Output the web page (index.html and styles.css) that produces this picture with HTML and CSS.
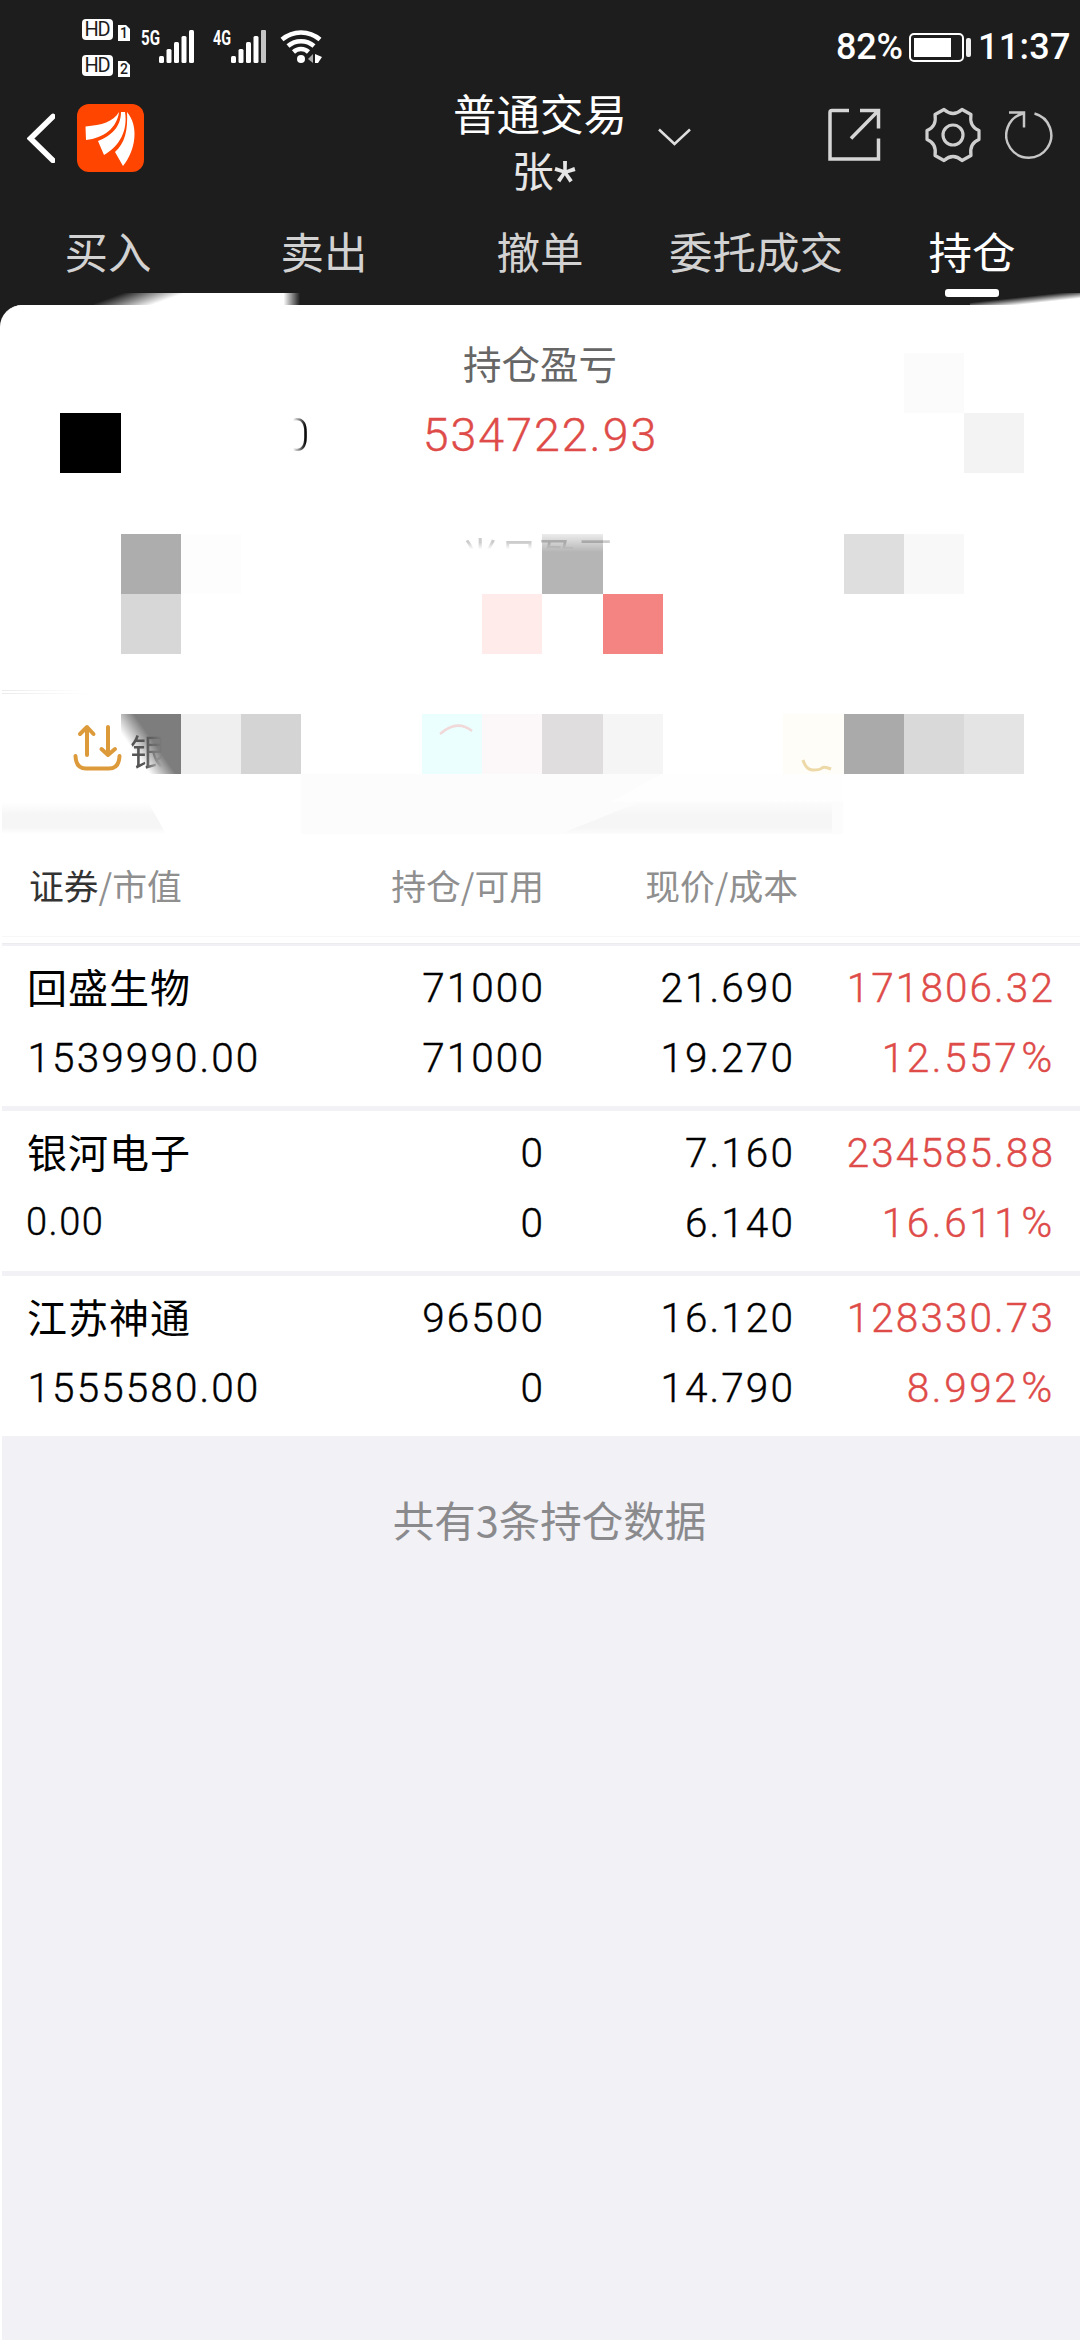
FILE: index.html
```html
<!DOCTYPE html>
<html lang="zh-CN">
<head>
  <meta charset="UTF-8" />
  <meta name="viewport" content="width=device-width, initial-scale=1.0"/>
  <title>持仓</title>
  <link rel="stylesheet" href="styles.css">
</head>
<body>

<header class="top">
  <div class="status-bar">
    <svg class="status-icons" width="250" height="60" viewBox="78 10 250 60">
      <g fill="#fff">
        <rect x="82" y="19" width="31" height="21" rx="4"/>
        <rect x="82" y="55" width="31" height="21" rx="4"/>
        <path d="M118 25h8l4 4v12h-12zM118 61h8l4 4v12h-12z"/>
        <rect x="159" y="56" width="5" height="7" rx="1.5"/>
        <rect x="166.500" y="49" width="5" height="14" rx="1.500"/>
        <rect x="174" y="42" width="5" height="21" rx="1.500"/>
        <rect x="181.500" y="36" width="5" height="27" rx="1.500"/>
        <rect x="189" y="30" width="5" height="33" rx="1.500"/>
        <rect x="231" y="56" width="5" height="7" rx="1.500"/>
        <rect x="238.500" y="49" width="5" height="14" rx="1.500"/>
        <rect x="246" y="42" width="5" height="21" rx="1.500"/>
        <rect x="253.500" y="36" width="5" height="27" rx="1.500"/>
        <rect x="261" y="30" width="5" height="33" rx="1" fill="#c4c4c4"/>
        <circle cx="301" cy="59" r="4"/>
        <path d="M315 54l7 3-4 6h-3z"/>
      </g>
      <path d="M313 54v9l-5-4z" fill="#aaa"/>
      <g fill="none" stroke="#fff" stroke-width="4.500">
        <path d="M282 39.500a29 29 0 0 1 38 0"/>
        <path d="M288 46a20 20 0 0 1 26 0"/>
        <path d="M293.500 52a11 11 0 0 1 15 0"/>
      </g>
      <g class="hd">
        <text x="84.500" y="36" textLength="26">HD</text>
        <text x="84.500" y="72" textLength="26">HD</text>
      </g>
      <g class="sim">
        <text x="120" y="38">1</text>
        <text x="120" y="74">2</text>
      </g>
      <g class="net">
        <text x="141" y="44.500" textLength="19" lengthAdjust="spacingAndGlyphs">5G</text>
        <text x="213" y="44.500" textLength="18" lengthAdjust="spacingAndGlyphs">4G</text>
      </g>
    </svg>
    <div class="status-right">
      <span class="battery-text">82%</span>
      <svg width="64" height="32" viewBox="907 32 64 32">
        <rect x="909" y="34" width="53" height="27" rx="4" fill="none" stroke="#fff" stroke-width="2"/>
        <rect x="913" y="38" width="37" height="19" fill="#fff"/>
        <rect x="965" y="38" width="5" height="19" rx="2" fill="#eee"/>
      </svg>
      <span class="clock">11:37</span>
    </div>
  </div>

  <div class="nav-bar">
    <div class="nav-left">
      <svg width="28" height="50" viewBox="27 112 28 50">
        <path d="M53 115.500L30.500 137.500L53 159.500" fill="none" stroke="#fff" stroke-width="5.500" stroke-linecap="round"/>
      </svg>
      <svg class="logo" width="68" height="68" viewBox="77 104 68 68">
        <rect x="77" y="104" width="67" height="68" rx="12" fill="#ff4500"/>
        <g fill="#fff">
          <path d="M119 112C113 122 102 125 85.500 126.500L86 140C104 138 117 128 119 112z"/>
          <path d="M121 112C121 127 111 136 98 141L104 155C120 146 128 130 125 112z"/>
          <path d="M127 112C128 130 125 143 115 152L123 166C136 150 139 126 127 112z"/>
        </g>
      </svg>
    </div>
    <div class="nav-title">
      <h1>普通交易</h1>
      <p>张<span class="star">*</span></p>
    </div>
    <svg class="chevron" width="38" height="22" viewBox="654 126 38 22">
      <path d="M657 129.500L672.500 144L688 129.500" fill="none" stroke="#dedede" stroke-width="2.500"/>
    </svg>
    <div class="nav-right">
      <svg width="56" height="56" viewBox="825 108 56 56">
        <path d="M848 111.500H831Q829 111.500 829 113.500V160H877.500V139.500M859 111.500H877.500V129.500M877 112L850 139.500" fill="none" stroke="#d6d6d6" stroke-width="3.500"/>
      </svg>
      <svg width="58" height="58" viewBox="-29 -29 58 58">
        <path d="M-9 -25.500Q0 -17.500 9 -25.500L18 -20.500Q16 -8.500 26 -4.500V4.500Q16 8.500 18 20.500L9 25.500Q0 17.500 -9 25.500L-18 20.500Q-16 8.500 -26 4.500V-4.500Q-16 -8.500 -18 -20.500z" fill="none" stroke="#cfcfcf" stroke-width="3.200" stroke-linejoin="round"/>
        <circle r="10" fill="none" stroke="#cfcfcf" stroke-width="3.200"/>
      </svg>
      <svg class="refresh" width="50" height="50" viewBox="1004 110 50 50">
        <path d="M1033.500 113.500A22.500 22.500 0 1 1 1022 113.500M1008 112.500H1023V127.500" fill="none" stroke="#c6c6c6" stroke-width="2.500"/>
      </svg>
    </div>
  </div>

  <nav class="tabs">
    <a>买入</a>
    <a>卖出</a>
    <a>撤单</a>
    <a>委托成交</a>
    <a class="active">持仓</a>
  </nav>
  <div class="smear smear-left"></div>
  <div class="smear smear-right"></div>
</header>

<main>
  <section class="summary">
    <p class="summary-label">持仓盈亏</p>
    <p class="summary-value">534722.93</p>

    <!-- mosaic over the private numbers -->
    <div class="mosaic">
      <i class="r1 c15 t-fb"></i>
      <i class="r2 c1 t-black"></i>
      <i class="r2 c16 t-f3"></i>
      <i class="r4 c2 t-ad"></i>
      <i class="r4 c3 t-fd"></i>
      <i class="r4 c9 t-fade"></i>
      <i class="r4 c14 t-de"></i>
      <i class="r4 c15 t-f8"></i>
      <i class="r5 c2 t-d7"></i>
      <i class="r5 c8 t-pink"></i>
      <i class="r5 c10 t-red"></i>
      <i class="r7 c2 t-dark"></i>
      <i class="r7 c3 t-ef"></i>
      <i class="r7 c4 t-d4"></i>
      <i class="r7 c7 t-cyan"></i>
      <i class="r7 c8 t-rose"></i>
      <i class="r7 c9 t-df"></i>
      <i class="r7 c10 t-f5"></i>
      <i class="r7 c13 t-cream"></i>
      <i class="r7 c14 t-aa"></i>
      <i class="r7 c15 t-d9"></i>
      <i class="r7 c16 t-e4"></i>
    </div>
    <span class="rest rest-zero">0</span>
    <span class="rest rest-today">当日盈亏</span>
    <span class="rest rest-bank">银</span>
    <svg class="rest rest-icons" width="1080" height="535" viewBox="0 305 1080 535">
      <defs>
        <linearGradient id="band" x1="0" y1="0" x2="0" y2="1">
          <stop offset="0" stop-color="#f6f6f6" stop-opacity="0"/>
          <stop offset=".4" stop-color="#f6f6f6"/>
          <stop offset=".8" stop-color="#f6f6f6"/>
          <stop offset="1" stop-color="#f6f6f6" stop-opacity="0"/>
        </linearGradient>
        <linearGradient id="line" x1="0" y1="0" x2="1" y2="0">
          <stop offset="0" stop-color="#eaeaea"/>
          <stop offset="1" stop-color="#eaeaea" stop-opacity="0"/>
        </linearGradient>
      </defs>
      <rect x="301" y="774" width="542" height="60" fill="#fcfcfc"/>
      <path d="M662 774H843V802H610z" fill="#fff" opacity=".7"/>
      <path d="M0 802H148L166 834H0z" fill="url(#band)"/>
      <path d="M640 802H832V834H560z" fill="url(#band)"/>
      <rect x="0" y="690" width="80" height="1" fill="url(#line)"/>
      <rect x="0" y="693" width="90" height="1" fill="url(#line)"/>
      <g fill="none" stroke="#dd9a3a" stroke-width="4" stroke-linecap="round" stroke-linejoin="round">
        <path d="M87 755V729M80 734L87 727L93.500 734"/>
        <path d="M108 727V754M101.500 749L108 755L115 749"/>
        <path d="M75.500 756Q76 768.500 86 768.500H109Q119 768.500 119.500 756"/>
      </g>
      <path d="M440 734Q457 719 472 731" fill="none" stroke="#f1d8d9" stroke-width="2.500"/>
      <path d="M803 760Q806 770 813 770T822 768T831 769" fill="none" stroke="#e9cf94" stroke-width="3" opacity=".8"/>
    </svg>
  </section>

  <div class="list-head">
    <span class="cell name"><b>证券</b>/市值</span>
    <span class="cell amount">持仓/可用</span>
    <span class="cell price">现价/成本</span>
    <span class="cell profit"></span>
  </div>

  <ul class="holdings">
    <li>
      <div class="cell name"><p class="cn">回盛生物</p><p>1539990.00</p></div>
      <div class="cell amount"><p>71000</p><p>71000</p></div>
      <div class="cell price"><p>21.690</p><p>19.270</p></div>
      <div class="cell profit"><p>171806.32</p><p>12.557<span class="pct">%</span></p></div>
    </li>
    <li>
      <div class="cell name"><p class="cn">银河电子</p><p class="small">0.00</p></div>
      <div class="cell amount"><p>0</p><p>0</p></div>
      <div class="cell price"><p>7.160</p><p>6.140</p></div>
      <div class="cell profit"><p>234585.88</p><p>16.611<span class="pct">%</span></p></div>
    </li>
    <li>
      <div class="cell name"><p class="cn">江苏神通</p><p>1555580.00</p></div>
      <div class="cell amount"><p>96500</p><p>0</p></div>
      <div class="cell price"><p>16.120</p><p>14.790</p></div>
      <div class="cell profit"><p>128330.73</p><p>8.992<span class="pct">%</span></p></div>
    </li>
  </ul>

  <p class="total">共有3条持仓数据</p>
</main>

</body>
</html>
```
FILE: styles.css
```css
* { box-sizing: border-box; }
body {
  margin: 0;
  width: 1080px;
  height: 2340px;
  background: #1d1d1d;
  font-family: 'Noto Sans CJK SC', sans-serif;
  overflow: hidden;
  display: flex;
  flex-direction: column;
}
h1, p, ul {
  margin: 0;
  padding: 0;
  font-weight: 400;
}
svg { display: block; flex: none; }

/* header */
.top {
  height: 305px;
  position: relative;
  flex: none;
}
.status-bar {
  height: 80px;
  padding: 10px 11px 0 78px;
  display: flex;
  justify-content: space-between;
  color: #fff;
}
.status-icons { overflow: visible; }
.hd text {
  font: 400 20px Roboto, sans-serif;
  fill: #1d1d1d;
}
.sim text {
  font: 500 14px Roboto, sans-serif;
  fill: #1d1d1d;
}
.net text {
  font: 700 20px Roboto, sans-serif;
  fill: #fff;
}
.status-right {
  display: flex;
  height: 32px;
  margin-top: 22px;
  font: 500 36px/30px Roboto, sans-serif;
}
.battery-text { width: 72px; letter-spacing: -0.200px; }
.clock { width: 91px; margin-left: 6px; letter-spacing: 0.300px; white-space: nowrap; }
.nav-bar {
  height: 128px;
  padding: 0 25px 0 27px;
  display: flex;
  align-items: flex-start;
}
.nav-left {
  display: flex;
  align-items: center;
  gap: 22px;
  width: 380px;
  padding-top: 24px;
}
.nav-title {
  width: 266px;
  text-align: center;
  color: #fff;
}
.nav-title h1 {
  font-size: 43.500px;
  line-height: 66px;
}
.nav-title p {
  font-size: 42px;
  line-height: 46px;
  color: #e6e6e6;
  padding-left: 8px;
}
.star {
  font-family: Roboto, sans-serif;
  font-size: 52px;
  line-height: 20px;
  position: relative;
  top: 11px;
}
.chevron { margin: 46px 0 0 -17px; }
.nav-right {
  flex: 1;
  display: flex;
  justify-content: flex-end;
  margin-top: 27px;
}
.nav-right svg:nth-child(2) { margin: -1px 23px 0 42px; }
.refresh { margin-top: 3px; }
.tabs {
  height: 97px;
  display: flex;
}
.tabs a {
  width: 216px;
  text-align: center;
  font-size: 43.500px;
  line-height: 86px;
  color: #d2d2d2;
  position: relative;
}
.tabs .active { color: #fff; }
.tabs .active::after {
  content: '';
  position: absolute;
  left: 81px;
  top: 81px;
  width: 54px;
  height: 8px;
  border-radius: 3px;
  background: #fff;
}
.smear {
  position: absolute;
  top: 293px;
  height: 12px;
}
.smear-left {
  left: 94px;
  width: 206px;
  background: linear-gradient(160deg, transparent 12%, #fff 38%);
  -webkit-mask: linear-gradient(to right, #000 92%, transparent);
  mask: linear-gradient(to right, #000 92%, transparent);
}
.smear-right {
  left: 970px;
  width: 110px;
  background: linear-gradient(to bottom right, transparent 40%, #fff 72%);
}

/* account summary */
main {
  flex: 1;
  background: #f1f1f6;
  border-top-left-radius: 22px;
  overflow: hidden;
  border-left: 2px solid #fff;
}
.summary {
  height: 535px;
  margin-left: -2px;
  background: #fff;
  position: relative;
  text-align: center;
  padding-top: 28px;
}
.summary-label {
  font-size: 38.500px;
  line-height: 58px;
  color: #666;
}
.summary-value {
  font: 300 46.500px/88px Roboto, sans-serif;
  letter-spacing: 2px;
  -webkit-text-stroke: .4px #de4b48;
  color: #de4b48;
  height: 76px;
  padding-left: 1px;
}
.mosaic {
  position: absolute;
  left: 0;
  top: 48px;
  display: grid;
  grid-template-columns: repeat(17, 60.250px);
  grid-template-rows: repeat(8, 60.200px);
}
.r1 { grid-row: 1; } .r2 { grid-row: 2; } .r4 { grid-row: 4; }
.r5 { grid-row: 5; } .r7 { grid-row: 7; }
.c1 { grid-column: 2; } .c2 { grid-column: 3; } .c3 { grid-column: 4; }
.c4 { grid-column: 5; } .c7 { grid-column: 8; } .c8 { grid-column: 9; }
.c9 { grid-column: 10; } .c10 { grid-column: 11; } .c13 { grid-column: 14; }
.c14 { grid-column: 15; } .c15 { grid-column: 16; } .c16 { grid-column: 17; }
.t-black { background: #000; }
.t-fb { background: #fbfbfb; }
.t-f3 { background: #f3f3f3; }
.t-ad { background: #adadad; }
.t-fd { background: #fdfdfd; }
.t-fade { background: linear-gradient(#ececec, #b5b5b5 30%); }
.t-de { background: #dedede; }
.t-f8 { background: #f8f8f8; }
.t-d7 { background: #d7d7d7; }
.t-pink { background: #feebea; }
.t-red { background: #f38482; }
.t-dark { background: linear-gradient(55deg, #fff 28%, #7d7d7d 54%); }
.t-ef { background: #efefef; }
.t-d4 { background: #d4d4d4; }
.t-cyan { background: #ebffff; }
.t-rose { background: #fcf8f9; }
.t-df { background: #dfdddd; }
.t-f5 { background: #f5f5f5; }
.t-cream { background: #fffdf8; }
.t-aa { background: #aaa; }
.t-d9 { background: #d9d9d9; }
.t-e4 { background: #e4e4e4; }

/* what the eraser left behind */
.rest { position: absolute; }
.rest-icons { left: 0; top: 0; }
.rest-zero {
  left: 284px;
  top: 101px;
  font: 300 46px/58px Roboto, sans-serif;
  color: transparent;
  background: linear-gradient(to right, #fff 35%, #000 85%);
  -webkit-background-clip: text;
  background-clip: text;
}
.rest-today {
  left: 461px;
  top: 220px;
  font-size: 38.500px;
  line-height: 58px;
  color: rgba(0, 0, 0, .2);
  -webkit-mask: linear-gradient(#000 30%, transparent 42%);
  mask: linear-gradient(#000 30%, transparent 42%);
}
.rest-bank {
  left: 130px;
  top: 422px;
  font-size: 36px;
  line-height: 46px;
  color: #555;
  -webkit-mask: linear-gradient(to right, #000 45%, transparent 90%);
  mask: linear-gradient(to right, #000 45%, transparent 90%);
}

/* holdings list */
.list-head, .holdings li {
  display: grid;
  grid-template-columns: 270px 244px 250px 260px;
  padding-left: 27px;
  background: #fff;
}
.list-head {
  height: 104px;
  font-size: 34.800px;
  line-height: 90px;
  color: #8f8f8f;
  border-bottom: 1px solid #ececf0;
  box-shadow: inset 0 -6px 0 #fff, inset 0 -7px 0 #f7f7f7;
}
.list-head b {
  font-weight: 400;
  color: #333;
}
.amount, .price, .profit { text-align: right; }
.list-head .amount { margin-right: -1px; }
.list-head .price { margin-right: -5px; }
.holdings {
  list-style: none;
  padding-top: 2px;
  display: flex;
  flex-direction: column;
  gap: 5px;
}
.holdings li {
  height: 160px;
  padding-top: 7px;
}
.holdings p {
  height: 70px;
  font: 300 40.500px/70px Roboto, sans-serif;
  letter-spacing: 2.100px;
  margin-right: -2px;
  color: #000;
  -webkit-text-stroke: .4px currentColor;
}
.holdings .name p { margin-left: -1.500px; }
.holdings .cn {
  font: 400 40px/66px 'Noto Sans CJK SC', sans-serif;
  letter-spacing: 1px;
  -webkit-text-stroke: 0;
}
.holdings .name .cn { margin-left: -2px; }
.holdings .name .small {
  font-size: 38px;
  line-height: 68px;
  letter-spacing: 1.500px;
  margin-left: -3px;
}
.pct { font-size: 42px; margin-left: 2px; line-height: 40px; }
.holdings .profit p { color: #de4b48; }
.holdings .profit p:last-child { letter-spacing: 2.600px; }
.total {
  text-align: center;
  font-size: 41.500px;
  line-height: 60px;
  margin-top: 53px;
  padding-left: 17px;
  color: #8a8a8d;
}
```
